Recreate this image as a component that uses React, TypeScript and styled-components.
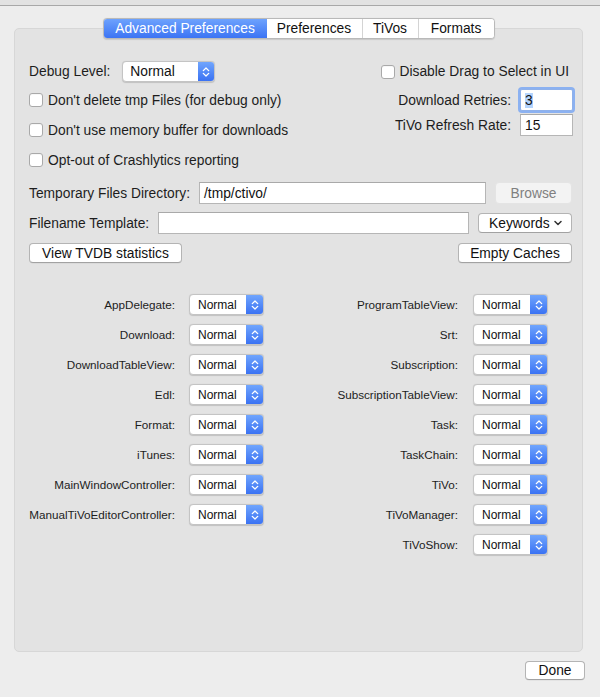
import React from "react";
import styled, { createGlobalStyle } from "styled-components";

const Global = createGlobalStyle`
  html, body { margin: 0; padding: 0; background: #ededed; }
  body {
    font-family: "Liberation Sans", Arial, Helvetica, sans-serif;
    color: #1d1d1d;
    width: 600px;
    height: 697px;
    overflow: hidden;
    font-size: 13.8px;
  }
  * { box-sizing: border-box; }
`;

const Window = styled.div`
  width: 600px;
  height: 697px;
  display: flex;
  flex-direction: column;
`;

const TitleEdge = styled.div`
  height: 6px;
  background: #e2e2e2;
  border-bottom: 1px solid #a8a8a8;
`;

const Body = styled.div`
  padding: 12px 15px 0 14px;
  display: flex;
  flex-direction: column;
`;

const TabBar = styled.div`
  display: flex;
  justify-content: center;
  margin-right: 2px;
  margin-bottom: -11px;
  position: relative;
  z-index: 1;
`;

const Segments = styled.div`
  display: flex;
  height: 21px;
  border: 1px solid #b9b9b9;
  border-radius: 4px;
  background: #fff;
  overflow: hidden;
  box-shadow: 0 0.5px 1px rgba(0, 0, 0, 0.12);
`;

const Tab = styled.div<{ $w: number; $active?: boolean }>`
  width: ${(p) => p.$w}px;
  display: flex;
  align-items: center;
  justify-content: center;
  font-size: 13.8px;
  color: ${(p) => (p.$active ? "#fff" : "#111")};
  background: ${(p) =>
    p.$active ? "linear-gradient(#6da2fd, #3c74f4)" : "#fff"};
  border-left: ${(p) => (p.$active ? "none" : "1px solid #d4d4d4")};
  &:nth-child(2) { border-left: none; }
`;

const Panel = styled.div`
  margin-right: 2px;
  height: 624px;
  background: #e3e3e3;
  border: 1px solid #d7d7d7;
  border-radius: 5px;
  padding: 32px 10px 0 14px;
  display: flex;
  flex-direction: column;
`;

const TopSection = styled.div`
  display: flex;
  justify-content: space-between;
  align-items: flex-start;
`;

const LeftCol = styled.div`
  display: flex;
  flex-direction: column;
`;

const RightCol = styled.div`
  display: flex;
  flex-direction: column;
  align-items: flex-end;
  margin-right: -1px;
`;

const InlineRow = styled.div<{ $h: number; $gap: number; $mt?: number; $mr?: number; $spread?: boolean }>`
  display: flex;
  align-items: center;
  justify-content: ${(p) => (p.$spread ? "space-between" : "flex-start")};
  height: ${(p) => p.$h}px;
  gap: ${(p) => p.$gap}px;
  margin-top: ${(p) => p.$mt ?? 0}px;
  margin-right: ${(p) => p.$mr ?? 0}px;
  white-space: nowrap;
`;

const CheckList = styled.div`
  margin-top: 8px;
  display: flex;
  flex-direction: column;
  gap: 10px;
`;

const Box = styled.span`
  width: 14px;
  height: 14px;
  background: #fff;
  border: 1px solid #a9a9a9;
  border-radius: 3px;
  box-shadow: inset 0 1px 0 rgba(0, 0, 0, 0.03);
  flex: none;
`;

const Label = styled.span`
  font-size: 13.8px;
  color: #1d1d1d;
  white-space: nowrap;
`;

const Field = styled.div<{ $w?: number; $focus?: boolean }>`
  ${(p) => (p.$w ? `width: ${p.$w}px;` : "flex: 1;")}
  height: 22px;
  background: #fff;
  border: 1px solid #b6b6b6;
  border-top-color: #a9a9a9;
  display: flex;
  align-items: center;
  padding-left: 4px;
  font-size: 13.8px;
  color: #111;
  ${(p) =>
    p.$focus
      ? "box-shadow: 0 0 0 2px rgba(110, 160, 245, 0.75); border-color: #8fb1ea; border-radius: 2px;"
      : ""}
`;

const Selected = styled.span`
  background: #b4d4fd;
`;

const Popup = styled.div<{ $w: number; $h: number }>`
  width: ${(p) => p.$w}px;
  height: ${(p) => p.$h}px;
  display: flex;
  background: #fff;
  border: 1px solid #c4c4c4;
  border-radius: 4px;
  overflow: hidden;
  box-shadow: 0 0.5px 1px rgba(0, 0, 0, 0.15);
`;

const PopupText = styled.div<{ $fs: number; $pl: number }>`
  flex: 1;
  display: flex;
  align-items: center;
  padding-left: ${(p) => p.$pl}px;
  font-size: ${(p) => p.$fs}px;
  color: #111;
`;

const PopupArrows = styled.div<{ $w: number }>`
  width: ${(p) => p.$w}px;
  background: linear-gradient(#70a5fd, #3a72f3);
  display: flex;
  align-items: center;
  justify-content: center;
`;

const Button = styled.div<{ $w?: number; $muted?: boolean; $h?: number }>`
  ${(p) => (p.$w ? `width: ${p.$w}px;` : "padding: 0 13.5px;")}
  height: ${(p) => p.$h ?? 20}px;
  display: flex;
  align-items: center;
  justify-content: center;
  font-size: 13.8px;
  white-space: nowrap;
  border-radius: 4px;
  ${(p) =>
    p.$muted
      ? "background: #f3f3f3; color: #808080; border: 1px solid #e4e4e4;"
      : "background: #fff; color: #111; border: 1px solid #b4b4b4; border-bottom-color: #a2a2a2; box-shadow: 0 0.5px 0.5px rgba(0,0,0,0.08);"}
`;

const KeywordsPopup = styled.div`
  width: 94px;
  height: 20px;
  display: flex;
  align-items: center;
  justify-content: space-between;
  padding: 0 9px 0 10px;
  background: #fff;
  border: 1px solid #b4b4b4;
  border-bottom-color: #a2a2a2;
  border-radius: 4px;
  font-size: 13.8px;
  color: #111;
`;

const LogSection = styled.div`
  margin-top: 31px;
  display: flex;
  gap: 36px;
`;

const LogGroup = styled.div<{ $labelW: number; $gap: number }>`
  display: grid;
  grid-template-columns: ${(p) => p.$labelW}px 75px;
  column-gap: ${(p) => p.$gap}px;
  row-gap: 9px;
  grid-auto-rows: 21px;
  align-items: center;
  align-content: start;
`;

const LogLabel = styled.span`
  font-size: 11.7px;
  text-align: right;
  white-space: nowrap;
  color: #1d1d1d;
`;

const Footer = styled.div`
  margin-top: 9px;
  display: flex;
  justify-content: flex-end;
`;

const UpDown = () => (
  <svg width="8" height="12" viewBox="0 0 8 12">
    <path d="M1.3 4.6 L4 2 L6.7 4.6" fill="none" stroke="#fff" strokeWidth="1.3" strokeLinecap="round" strokeLinejoin="round" />
    <path d="M1.3 7.4 L4 10 L6.7 7.4" fill="none" stroke="#fff" strokeWidth="1.3" strokeLinecap="round" strokeLinejoin="round" />
  </svg>
);

const ChevronDown = () => (
  <svg width="8" height="6" viewBox="0 0 8 6">
    <path d="M1 1.5 L4 4.5 L7 1.5" fill="none" stroke="#333" strokeWidth="1.5" strokeLinecap="round" strokeLinejoin="round" />
  </svg>
);

const SelectBox = ({ w, h, fs, pl, aw }: { w: number; h: number; fs: number; pl: number; aw: number }) => (
  <Popup $w={w} $h={h}>
    <PopupText $fs={fs} $pl={pl}>Normal</PopupText>
    <PopupArrows $w={aw}>
      <UpDown />
    </PopupArrows>
  </Popup>
);

const Check = ({ label }: { label: string }) => (
  <InlineRow $h={20} $gap={5}>
    <Box />
    <Label>{label}</Label>
  </InlineRow>
);

const leftLogs = [
  "AppDelegate:",
  "Download:",
  "DownloadTableView:",
  "Edl:",
  "Format:",
  "iTunes:",
  "MainWindowController:",
  "ManualTiVoEditorController:",
];

const rightLogs = [
  "ProgramTableView:",
  "Srt:",
  "Subscription:",
  "SubscriptionTableView:",
  "Task:",
  "TaskChain:",
  "TiVo:",
  "TiVoManager:",
  "TiVoShow:",
];

const tabs = [
  { name: "Advanced Preferences", w: 163, active: true },
  { name: "Preferences", w: 95 },
  { name: "TiVos", w: 56 },
  { name: "Formats", w: 76 },
];

export default function App() {
  return (
    <Window>
      <Global />
      <TitleEdge />
      <Body>
        <TabBar>
          <Segments>
            {tabs.map((t) => (
              <Tab key={t.name} $w={t.w} $active={t.active}>
                {t.name}
              </Tab>
            ))}
          </Segments>
        </TabBar>
        <Panel>
          <TopSection>
            <LeftCol>
              <InlineRow $h={21} $gap={12}>
                <Label>Debug Level:</Label>
                <SelectBox w={93} h={21} fs={13.8} pl={7} aw={16} />
              </InlineRow>
              <CheckList>
                <Check label="Don't delete tmp Files (for debug only)" />
                <Check label="Don't use memory buffer for downloads" />
                <Check label="Opt-out of Crashlytics reporting" />
              </CheckList>
            </LeftCol>
            <RightCol>
              <InlineRow $h={21} $gap={5} $mr={4}>
                <Box />
                <Label>Disable Drag to Select in UI</Label>
              </InlineRow>
              <InlineRow $h={22} $gap={9} $mt={7}>
                <Label>Download Retries:</Label>
                <Field $w={53} $focus>
                  <Selected>3</Selected>
                </Field>
              </InlineRow>
              <InlineRow $h={22} $gap={9} $mt={3}>
                <Label>TiVo Refresh Rate:</Label>
                <Field $w={53}>15</Field>
              </InlineRow>
            </RightCol>
          </TopSection>

          <InlineRow $h={22} $gap={9} $mt={12}>
            <Label>Temporary Files Directory:</Label>
            <Field>/tmp/ctivo/</Field>
            <Button $w={77} $h={22} $muted>
              Browse
            </Button>
          </InlineRow>

          <InlineRow $h={22} $gap={9} $mt={8}>
            <Label>Filename Template:</Label>
            <Field />
            <KeywordsPopup>
              Keywords
              <ChevronDown />
            </KeywordsPopup>
          </InlineRow>

          <InlineRow $h={20} $gap={0} $mt={9} $spread>
            <Button $w={153}>View TVDB statistics</Button>
            <Button $w={114}>Empty Caches</Button>
          </InlineRow>

          <LogSection>
            <LogGroup $labelW={146} $gap={14}>
              {leftLogs.map((l) => (
                <React.Fragment key={l}>
                  <LogLabel>{l}</LogLabel>
                  <SelectBox w={75} h={21} fs={12} pl={8} aw={17} />
                </React.Fragment>
              ))}
            </LogGroup>
            <LogGroup $labelW={158} $gap={15}>
              {rightLogs.map((l) => (
                <React.Fragment key={l}>
                  <LogLabel>{l}</LogLabel>
                  <SelectBox w={75} h={21} fs={12} pl={8} aw={17} />
                </React.Fragment>
              ))}
            </LogGroup>
          </LogSection>
        </Panel>
        <Footer>
          <Button $w={60} $h={19}>
            Done
          </Button>
        </Footer>
      </Body>
    </Window>
  );
}
